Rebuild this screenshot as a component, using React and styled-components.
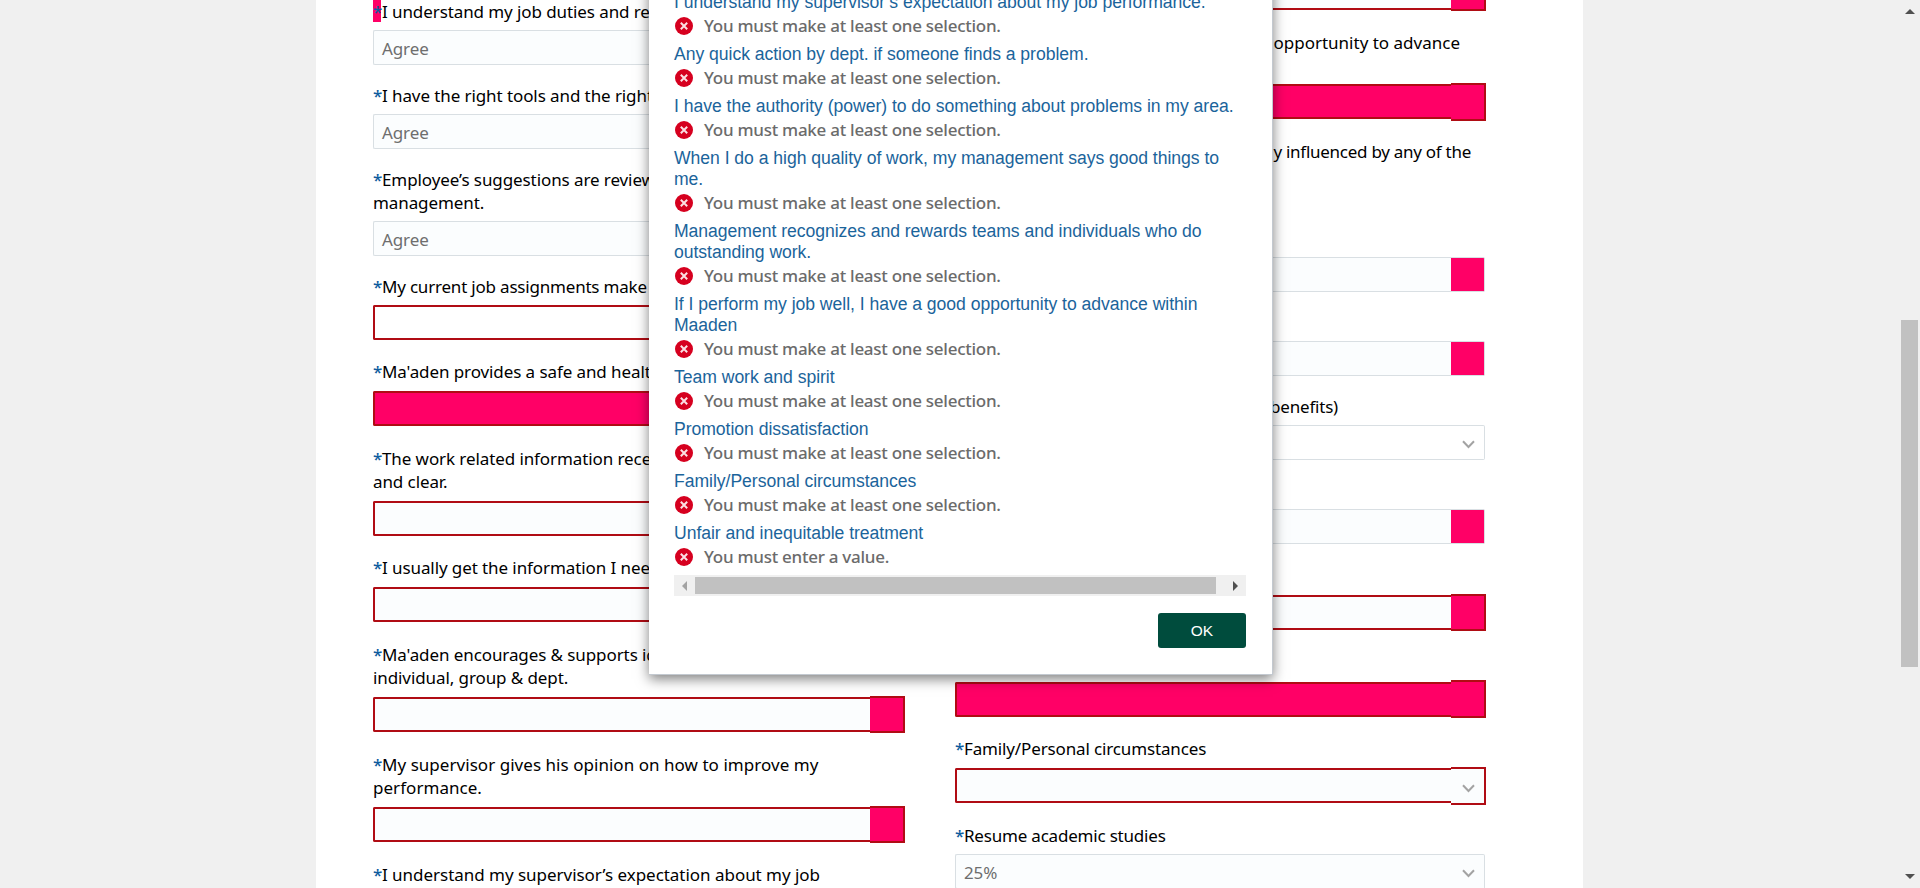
import React from "react";
import styled, { createGlobalStyle, css } from "styled-components";

const PINK = "#ff0066";
const RED = "#b00c14";

const GlobalStyle = createGlobalStyle`
  * { box-sizing: border-box; }
  html, body { margin: 0; height: 888px; overflow: hidden; background: #f0f0f0; }
  body { font-family: "Noto Sans", "Open Sans", sans-serif; font-size: 17px; color: #000; }
`;

const Page = styled.div`
  position: relative;
  display: flex;
  height: 888px;
  overflow: hidden;
  padding-left: 316px;
  background: #f0f0f0;
`;

const Sheet = styled.main`
  display: flex;
  gap: 50px;
  width: 1267px;
  height: 888px;
  padding-left: 57px;
  overflow: hidden;
  background: #fff;
`;

const Column = styled.div`
  flex: none;
  width: ${(p) => p.$width}px;
  margin-top: ${(p) => p.$top}px;
`;

const Field = styled.section`
  margin-top: ${(p) => p.$gap}px;
`;

const Label = styled.div`
  height: ${(p) => p.$lines * 23}px;
  margin-top: -1px;
  margin-bottom: ${(p) => p.$below + 1}px;
  width: ${(p) => (p.$end ? p.$end + "px" : "auto")};
  text-align: ${(p) => (p.$end ? "right" : "left")};
  line-height: 23px;
  letter-spacing: ${(p) => p.$track ?? -0.09}px;
  white-space: pre;
`;

const Star = styled.span`
  display: inline-block;
  width: 9px;
  height: 23px;
  vertical-align: top;
  letter-spacing: 0;
  font-weight: 500;
  color: #0f5c9e;
  ${(p) =>
    p.$marked &&
    css`
      width: 8px;
      height: 22px;
      margin-right: 1px;
      background: ${PINK};
    `}
`;

const FieldRow = styled.div`
  display: flex;
  width: ${(p) => (p.$invalid ? "100%" : "calc(100% - 1px)")};
  height: 35px;
`;

const Input = styled.div`
  flex: 1;
  padding: 0 8px;
  border: ${(p) => (p.$invalid ? `2px solid ${RED}` : "1px solid #d9dfe3")};
  border-right: 0;
  border-radius: 2px 0 0 2px;
  background: ${(p) => p.$bg || "#fbfdfe"};
  color: #6e6e6e;
  line-height: 36px;
  letter-spacing: -0.1px;
`;

const DropButton = styled.div`
  display: flex;
  align-items: center;
  justify-content: center;
  width: ${(p) => (p.$invalid ? 35 : 34)}px;
  ${(p) =>
    p.$invalid
      ? css`
          margin: ${p.$up || -1}px 0 ${p.$down || -1}px;
          border: 2px solid ${RED};
          border-left: 0;
        `
      : css`
          border: 1px solid #d9dfe3;
          border-left: 0;
          border-radius: 0 2px 2px 0;
        `}
  background: ${(p) => (p.$pink ? PINK : p.$bg || "#fbfdfe")};
  svg {
    margin: 4px 0 0 1px;
  }
`;

const Chevron = () => (
  <svg width="13" height="9" viewBox="0 0 13 9" fill="none" stroke="#a3a3a3" strokeWidth="2">
    <path d="M1 1.2 6.5 7 12 1.2" />
  </svg>
);

const Dialog = styled.div`
  position: absolute;
  top: -20px;
  left: 649px;
  width: 624px;
  height: 695px;
  padding: 11px 26px 0 25px;
  background: #fff;
  border: 1px solid #c3c9d0;
  border-top: 0;
  border-left: 0;
  box-shadow: 0 4px 12px rgba(0, 0, 0, 0.5);
`;

const ErrorItem = styled.div`
  display: flex;
  flex-direction: column;
`;

const ErrorLink = styled.a`
  padding-top: 1px;
  margin-bottom: -1px;
  color: #1b649b;
  font: 17.6px/21px "Liberation Sans", Arial, sans-serif;
  letter-spacing: -0.04px;
  white-space: pre;
`;

const ErrorMessage = styled.div`
  display: flex;
  align-items: center;
  height: 31px;
  padding-left: 1px;
  padding-bottom: 3px;
  gap: 11px;
  color: #6b6b6b;
  font-weight: 500;
  line-height: 24px;
  letter-spacing: -0.27px;
`;

const ErrorIcon = () => (
  <svg width="18" height="18" viewBox="0 0 18 18">
    <circle cx="9" cy="9" r="9" fill="#d6001f" />
    <path d="M5.8 5.8l6.4 6.4M12.2 5.8l-6.4 6.4" stroke="#fbdfe3" strokeWidth="2" />
  </svg>
);

const HScroll = styled.div`
  display: flex;
  align-items: center;
  justify-content: space-between;
  height: 21px;
  margin-top: 1px;
  padding: 0 8px;
  background: #f0f0f0;
`;

const HThumb = styled.div`
  width: 521px;
  height: 17px;
  margin-left: -4px;
  margin-right: 6px;
  background: #c1c1c1;
`;

const Actions = styled.div`
  display: flex;
  justify-content: flex-end;
  margin-top: 17px;
`;

const OkButton = styled.button`
  width: 88px;
  height: 35px;
  padding: 0;
  border: 0;
  border-radius: 3px;
  background: #004c3d;
  color: #fff;
  font: 15.5px "Liberation Sans", Arial, sans-serif;
`;

const VScroll = styled.div`
  display: flex;
  flex-direction: column;
  align-items: center;
  width: 17px;
  height: 888px;
  margin-left: auto;
  margin-right: 2px;
  padding: 9px 0;
`;

const VThumb = styled.div`
  width: 17px;
  height: 347px;
  margin-top: 306px;
  margin-bottom: auto;
  background: #c1c1c1;
`;

const leftFields = [
  { label: "I understand my job duties and responsibilities.", value: "Agree", gap: 0, marked: true },
  { label: "I have the right tools and the right equipment.", value: "Agree", gap: 20 },
  { label: "Employee’s suggestions are reviewed by\nmanagement.", value: "Agree", gap: 20 },
  { label: "My current job assignments make good use", gap: 20, invalid: true, bg: "#fff", track: -0.2 },
  { label: "Ma'aden provides a safe and healthy place", gap: 21, below: 7, invalid: true, bg: PINK },
  { label: "The work related information received is\nand clear.", gap: 22, below: 7, invalid: true },
  { label: "I usually get the information I need to", gap: 21, below: 7, invalid: true },
  { label: "Ma'aden encourages & supports ideas\nindividual, group & dept.", gap: 22, below: 7, invalid: true, pink: true },
  { label: "My supervisor gives his opinion on how to improve my\nperformance.", gap: 22, below: 7, invalid: true, pink: true, track: 0.04 },
  { label: "I understand my supervisor’s expectation about my job\nperformance.", gap: 22, below: 7, invalid: true, track: -0.03 },
];

const rightFields = [
  { gap: 0, below: 0, invalid: true, pink: true },
  { label: "I have a good opportunity to advance\n ", end: 505, gap: 22, below: 6, invalid: true, pink: true, bg: PINK, down: -2, track: 0 },
  { label: "strongly influenced by any of the", end: 516, gap: 22, below: 93, track: -0.27 },
  { label: "", gap: 0, below: 0, pink: true },
  { label: "Team relations", gap: 20, pink: true },
  { label: "Compensation (Salary & benefits)", end: 383, gap: 20, bg: "#fff", track: -0.2 },
  { label: "Work location", gap: 20, pink: true },
  { label: "Team work and spirit", gap: 21, below: 7, invalid: true, pink: true },
  { label: "Promotion dissatisfaction", gap: 22, below: 7, invalid: true, pink: true, bg: PINK, up: -2 },
  { label: "Family/Personal circumstances", gap: 21, below: 7, invalid: true, down: -2, track: -0.14 },
  { label: "Resume academic studies", gap: 22, below: 6, value: "25%", track: -0.2 },
];

const SELECT = "You must make at least one selection.";
const errors = [
  ["I understand my supervisor’s expectation about my job performance."],
  ["Any quick action by dept. if someone finds a problem."],
  ["I have the authority (power) to do something about problems in my area."],
  ["When I do a high quality of work, my management says good things to\nme."],
  ["Management recognizes and rewards teams and individuals who do\noutstanding work."],
  ["If I perform my job well, I have a good opportunity to advance within\nMaaden"],
  ["Team work and spirit"],
  ["Promotion dissatisfaction"],
  ["Family/Personal circumstances"],
  ["Unfair and inequitable treatment", "You must enter a value."],
];

function FormField({ f }) {
  const textOnly = f.below > 50;
  return (
    <Field $gap={f.gap}>
      {f.label && (
        <Label $lines={f.label.split("\n").length} $below={f.below || 6} $end={f.end} $track={f.track}>
          <Star $marked={f.marked}>*</Star>
          {f.label}
        </Label>
      )}
      {!textOnly && (
        <FieldRow $invalid={f.invalid}>
          <Input $invalid={f.invalid} $bg={f.bg}>{f.value}</Input>
          <DropButton $invalid={f.invalid} $pink={f.pink} $bg={f.bg} $up={f.up} $down={f.down}>
            {!f.pink && <Chevron />}
          </DropButton>
        </FieldRow>
      )}
    </Field>
  );
}

export default function App() {
  return (
    <Page>
      <GlobalStyle />
      <Sheet>
        <Column $top={1} $width={532}>
          {leftFields.map((f) => <FormField key={f.label} f={f} />)}
        </Column>
        <Column $top={-25} $width={531}>
          {rightFields.map((f, i) => <FormField key={i} f={f} />)}
        </Column>
      </Sheet>
      <VScroll>
        <svg width="10" height="5" viewBox="0 0 10 5"><path d="M0 5 5 0l5 5z" fill="#505050" /></svg>
        <VThumb />
        <svg width="10" height="5" viewBox="0 0 10 5"><path d="M0 0l5 5 5-5z" fill="#505050" /></svg>
      </VScroll>
      <Dialog>
        {errors.map(([title, message]) => (
          <ErrorItem key={title}>
            <ErrorLink>{title}</ErrorLink>
            <ErrorMessage><ErrorIcon />{message || SELECT}</ErrorMessage>
          </ErrorItem>
        ))}
        <HScroll>
          <svg width="5" height="10" viewBox="0 0 5 10"><path d="M5 0 0 5l5 5z" fill="#a3a3a3" /></svg>
          <HThumb />
          <svg width="5" height="10" viewBox="0 0 5 10"><path d="M0 0l5 5-5 5z" fill="#505050" /></svg>
        </HScroll>
        <Actions><OkButton>OK</OkButton></Actions>
      </Dialog>
    </Page>
  );
}
